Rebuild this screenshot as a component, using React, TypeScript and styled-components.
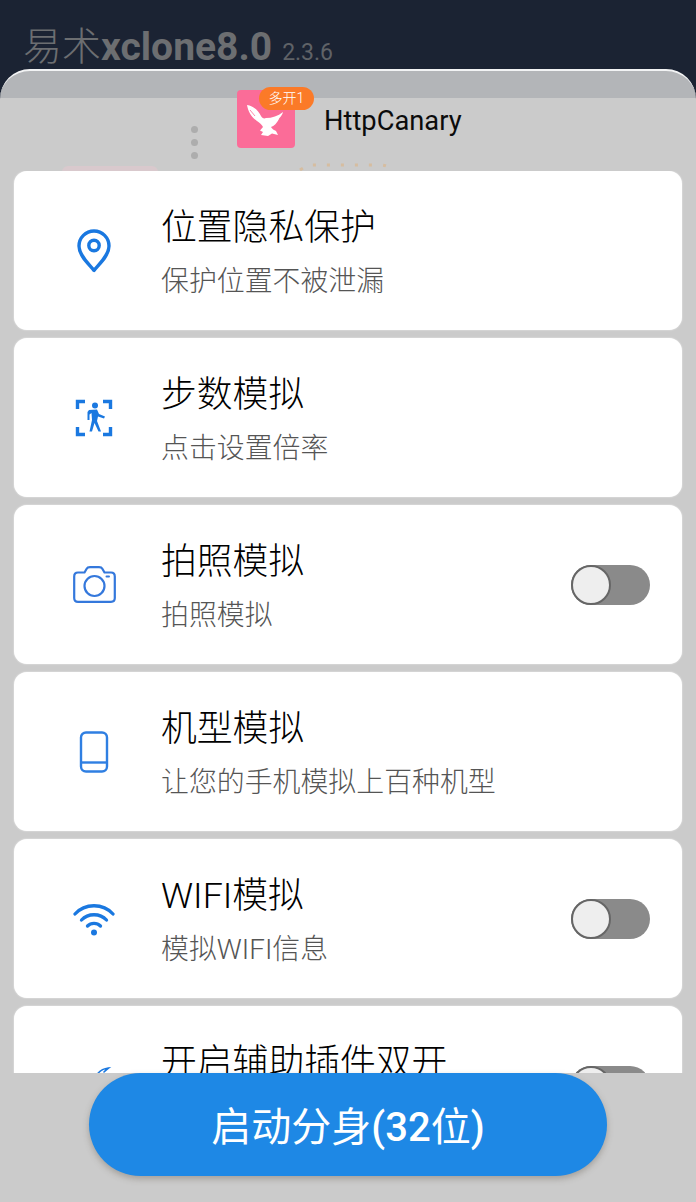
import React from "react";
import styled, { createGlobalStyle } from "styled-components";

const Global = createGlobalStyle`
  html, body { margin: 0; padding: 0; background: #1b2333; }
  * { box-sizing: border-box; }
  body { font-family: Roboto, "Noto Sans CJK SC", sans-serif; }
`;

const Page = styled.div`
  width: 696px;
  height: 1202px;
  display: flex;
  flex-direction: column;
  overflow: hidden;
  background: #1b2333;
`;

const TopBar = styled.header`
  height: 69px;
  flex: none;
  display: flex;
  align-items: baseline;
  padding: 22px 0 0 23px;
  color: #6c6e71;
`;

const BrandCjk = styled.span`
  font-size: 39px;
  line-height: 50px;
  font-weight: 300;
`;

const BrandLatin = styled.span`
  font-size: 39px;
  line-height: 50px;
  font-weight: 700;
`;

const Version = styled.span`
  margin-left: 10px;
  font-size: 23px;
  color: #5f6267;
`;

const Sheet = styled.section`
  position: relative;
  flex: 1;
  min-height: 0;
  display: flex;
  flex-direction: column;
  border-top: 2px solid #f2f3f4;
  border-radius: 30px 30px 0 0;
  background: linear-gradient(#b3b5b8 27px, #cbcbcb 27px);
  overflow: hidden;
`;

const DimDots = styled.div`
  position: absolute;
  left: 191px;
  top: 55px;
  display: flex;
  flex-direction: column;
  gap: 6px;
`;

const DimDot = styled.i`
  display: block;
  width: 7px;
  height: 7px;
  border-radius: 50%;
  background: #adadad;
`;

const DimTab = styled.div`
  position: absolute;
  left: 62px;
  top: 95px;
  width: 96px;
  height: 12px;
  border-radius: 6px 6px 0 0;
  background: #d9c9cd;
`;

const DimArc = styled.svg`
  position: absolute;
  left: 296px;
  top: 90px;
`;

const AppRow = styled.div`
  position: relative;
  flex: none;
  display: flex;
  align-items: center;
  gap: 30px;
  padding: 19px 0 0 237px;
`;

const AppIcon = styled.div`
  position: relative;
  width: 58px;
  height: 58px;
  border-radius: 4px;
  background: #fb6c98;
  display: flex;
  align-items: center;
  justify-content: center;
`;

const Badge = styled.span`
  position: absolute;
  left: 22px;
  top: -3px;
  width: 55px;
  height: 23px;
  border-radius: 12px;
  background: #fb7a28;
  color: #fff;
  font-size: 14px;
  font-weight: 300;
  line-height: 23px;
  text-align: center;
  white-space: nowrap;
`;

const AppName = styled.span`
  font-size: 27.3px;
  line-height: 34px;
  color: #0b0b0b;
  margin-top: 3px;
  margin-left: -1px;
`;

const List = styled.div`
  position: relative;
  height: 902px;
  flex: none;
  margin-top: 23px;
  padding: 0 14px;
  overflow: hidden;
  display: flex;
  flex-direction: column;
  gap: 8px;
`;

const Card = styled.article`
  flex: none;
  height: 159px;
  display: flex;
  align-items: center;
  padding: 0 32px 0 0;
  background: #fff;
  border-radius: 13px;
  box-shadow: 0 0 2px rgba(255, 255, 255, 0.7);
`;

const IconCell = styled.div`
  flex: none;
  width: 147px;
  padding-right: 11px;
  padding-left: 24px;
  display: flex;
  justify-content: center;
  color: #1a78e0;
`;

const Copy = styled.div`
  flex: 1;
  min-width: 0;
  display: flex;
  flex-direction: column;
  gap: 13px;
  margin-top: 4px;
`;

const Title = styled.div`
  font-size: 35.8px;
  line-height: 46px;
  font-weight: 300;
  color: #000;
  white-space: nowrap;
`;

const Subtitle = styled.div`
  font-size: 27.9px;
  line-height: 36px;
  font-weight: 300;
  color: #555;
  white-space: nowrap;
`;

const Toggle = styled.div`
  flex: none;
  width: 79px;
  height: 40px;
  border-radius: 20px;
  background: #8a8a8a;
`;

const Thumb = styled.div`
  width: 40px;
  height: 40px;
  border-radius: 50%;
  background: #eeeeee;
  border: 2px solid #666;
`;

const Footer = styled.footer`
  position: relative;
  flex: 1;
  display: flex;
  justify-content: center;
  align-items: flex-start;
`;

const StartButton = styled.button`
  width: 518px;
  height: 103px;
  border: 0;
  border-radius: 52px;
  background: #1e88e5;
  color: #fff;
  font-family: inherit;
  font-size: 40px;
  font-weight: 400;
  padding-bottom: 2px;
  box-shadow: 0 3px 6px rgba(90, 80, 70, 0.35);
`;

const ButtonLatin = styled.span`
  font-weight: 500;
`;

const Pin = () => (
  <svg width="34" height="44" viewBox="0 0 34 44" fill="none" stroke="currentColor" strokeWidth="3.4">
    <path d="M17 41.5 C13 36 2 27 2 17 A15 15 0 0 1 32 17 C32 27 21 36 17 41.5 Z" strokeLinejoin="round" />
    <circle cx="17" cy="16.5" r="5.2" />
  </svg>
);

const Walker = () => (
  <svg width="40" height="40" viewBox="0 0 40 40" fill="none">
    <g stroke="currentColor" strokeWidth="3.4">
      <path d="M11 3.5 H3.5 V11" />
      <path d="M29 3.5 H36.5 V11" />
      <path d="M3.5 29 V36.5 H11" />
      <path d="M36.5 29 V36.5 H29" />
    </g>
    <circle cx="21" cy="7.5" r="3" fill="currentColor" />
    <path
      d="M15 12 L23 11.5 L25 16 L31 18.5 L30 20.5 L24 18.5 L23 23 L27 33.5 H24.5 L20.5 25 L18 33.5 H15.5 L18 22 L17.5 15 L15.5 16.5 L15.5 22 H13.5 V14 Z"
      fill="currentColor"
    />
  </svg>
);

const Camera = () => (
  <svg width="43" height="37" viewBox="0 0 43 37" fill="none" stroke="#3478dc" strokeWidth="2.2">
    <path
      d="M5 6.5 H11.5 L13.5 3 Q14.5 1.2 17 1.2 H26 Q28.5 1.2 29.5 3 L31.5 6.5 H38 Q41.8 6.5 41.8 10.5 V32 Q41.8 35.8 38 35.8 H5 Q1.2 35.8 1.2 32 V10.5 Q1.2 6.5 5 6.5 Z"
      strokeLinejoin="round"
    />
    <circle cx="21.5" cy="20" r="10" />
    <path d="M33.5 10.5 H36" strokeWidth="2" strokeLinecap="round" />
  </svg>
);

const Phone = () => (
  <svg width="30" height="42" viewBox="0 0 30 42" fill="none" stroke="#2f7fe2" strokeWidth="2.4">
    <rect x="2" y="1.5" width="26" height="39" rx="5" />
    <path d="M2 31.5 H28" />
  </svg>
);

const Wifi = () => (
  <svg width="42" height="34" viewBox="0 0 42 34" fill="none" stroke="currentColor" strokeWidth="3.3" strokeLinecap="round">
    <path d="M2 12 C12 1 30 1 40 12" />
    <path d="M8.5 18 C15 11 27 11 33.5 18" />
    <path d="M14.5 24 C18 20.5 24 20.5 27.5 24" />
    <circle cx="21" cy="30.5" r="3" fill="currentColor" stroke="none" />
  </svg>
);

const Plugin = () => (
  <svg width="44" height="40" viewBox="0 0 44 40" fill="none" stroke="currentColor" strokeWidth="1.6" strokeLinecap="round">
    <path d="M25 8.5 C28 4.5 32 2.5 36.5 2 C34.5 3.5 33.5 4.5 32 6" />
  </svg>
);

const Eagle = () => (
  <svg width="40" height="36" viewBox="0 0 40 36" fill="#fff">
    <path d="M1 4 C7 5 12 9 15 15 C16 17 18 18 20 17 C26 17 32 15 37 11 C36 15 33 17 33 18 C31 22 28 25 25 26 C26 28 28 29 30 30 L32 34 L26 32.5 L22 35 L15 34 L17 31 L14 29.5 L17 26 C16 24 14 22 11 20 C5 16 2 10 1 4 Z" />
    <path d="M4 9 L9 15" stroke="#fb6c98" strokeWidth="0.8" />
  </svg>
);

type Row = { title: string; sub: string; icon: React.ReactNode; toggle?: boolean };

const rows: Row[] = [
  { title: "位置隐私保护", sub: "保护位置不被泄漏", icon: <Pin /> },
  { title: "步数模拟", sub: "点击设置倍率", icon: <Walker /> },
  { title: "拍照模拟", sub: "拍照模拟", icon: <Camera />, toggle: true },
  { title: "机型模拟", sub: "让您的手机模拟上百种机型", icon: <Phone /> },
  { title: "WIFI模拟", sub: "模拟WIFI信息", icon: <Wifi />, toggle: true },
  { title: "开启辅助插件双开", sub: "开启辅助插件双开", icon: <Plugin />, toggle: true },
];

export default function App() {
  return (
    <Page>
      <Global />
      <TopBar>
        <BrandCjk>易术</BrandCjk>
        <BrandLatin>xclone8.0</BrandLatin>
        <Version>2.3.6</Version>
      </TopBar>
      <Sheet>
        <DimDots>
          <DimDot />
          <DimDot />
          <DimDot />
        </DimDots>
        <DimTab />
        <DimArc width="104" height="20" viewBox="0 0 104 20" fill="none">
          <path d="M4 9 Q12 4 16 4 L84 4 Q92 4 96 9" stroke="#d6bda0" strokeWidth="3" strokeDasharray="3 11" />
        </DimArc>
        <AppRow>
          <AppIcon>
            <Eagle />
            <Badge>多开1</Badge>
          </AppIcon>
          <AppName>HttpCanary</AppName>
        </AppRow>
        <List>
          {rows.map((r) => (
            <Card key={r.sub}>
              <IconCell>{r.icon}</IconCell>
              <Copy>
                <Title>{r.title}</Title>
                <Subtitle>{r.sub}</Subtitle>
              </Copy>
              {r.toggle && (
                <Toggle>
                  <Thumb />
                </Toggle>
              )}
            </Card>
          ))}
        </List>
        <Footer>
          <StartButton>
            启动分身<ButtonLatin>(32</ButtonLatin>位<ButtonLatin>)</ButtonLatin>
          </StartButton>
        </Footer>
      </Sheet>
    </Page>
  );
}
